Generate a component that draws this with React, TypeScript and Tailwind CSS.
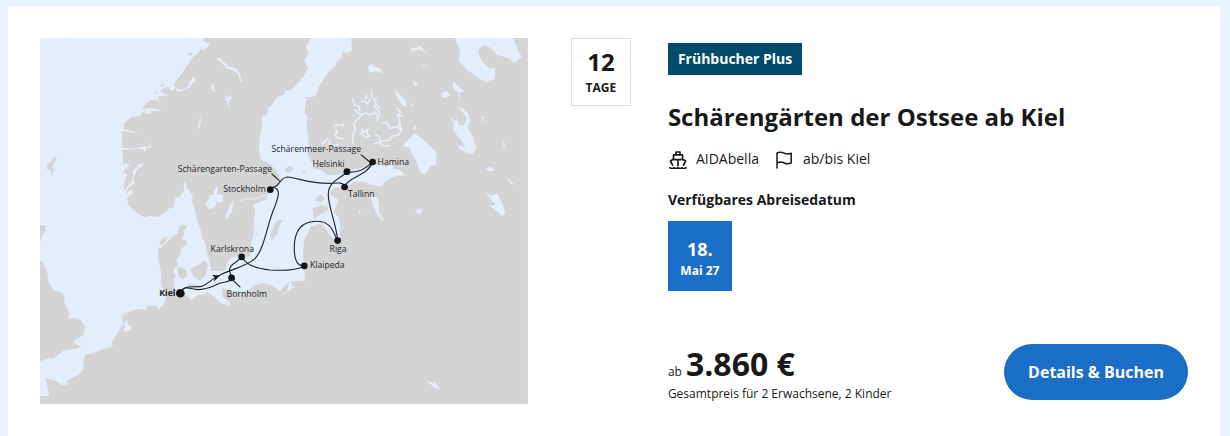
interface Port {
  name: string
  x: number
  y: number
  labelX: number
  labelY: number
}

const ports: Port[] = [
  { name: 'Stockholm', x: 691, y: 455, labelX: 550, labelY: 461 },
  { name: 'Helsinki', x: 921, y: 401, labelX: 818, labelY: 388 },
  { name: 'Hamina', x: 998, y: 372, labelX: 1013, labelY: 382 },
  { name: 'Tallinn', x: 914, y: 447, labelX: 924, labelY: 478 },
  { name: 'Riga', x: 893, y: 608, labelX: 869, labelY: 642 },
  { name: 'Klaipeda', x: 793, y: 684, labelX: 810, labelY: 691 },
  { name: 'Karlskrona', x: 605, y: 657, labelX: 512, labelY: 641 },
  { name: 'Bornholm', x: 575, y: 720, labelX: 560, labelY: 776 },
]

const land = [
  // Norway and Sweden
  'M490 0 L490 8 499 14 512 15 504 26 490 35 484 30 475 45 460 55 440 85 425 108 412 122 402 143 410 150 420 155 438 152 449 140 445 132 455 126 460 116 466 122 462 134 454 138 452 146 442 154 425 160 414 162 407 150 392 160 387 148 372 150 361 160 384 172 355 175 356 188 368 204 350 186 334 187 318 196 306 214 330 210 350 213 362 220 336 219 330 229 308 222 300 233 275 237 262 246 252 258 250 273 266 276 285 282 305 278 280 286 260 280 246 280 247 330 270 332 292 330 310 326 328 326 327 311 334 328 318 332 316 342 308 332 285 334 247 336 249 380 258 376 270 382 255 392 248 402 262 410 254 425 252 440 252 462 265 442 275 430 280 412 278 398 290 388 296 378 312 376 304 386 292 394 286 408 280 424 284 434 266 450 257 466 266 462 275 454 279 466 263 478 264 500 275 512 292 525 312 538 332 534 355 537 378 521 392 508 400 510 406 480 420 475 432 458 432 440 437 425 440 450 453 466 458 476 456 492 464 512 472 550 482 575 486 600 496 614 500 640 510 672 514 700 545 699 558 695 562 672 575 657 598 654 625 658 638 640 634 615 641 590 642 540 645 515 640 500 660 492 678 484 684 470 692 462 700 452 716 440 720 420 712 402 694 382 680 372 662 366 657 330 660 290 666 270 666 235 680 232 686 210 702 192 712 176 732 170 734 158 752 155 770 140 786 122 804 92 794 68 806 46 798 26 812 0 Z',
  // Finland, the Baltics, the continent and Jutland
  'M934 0 L936 38 922 44 906 42 908 56 892 70 884 86 862 106 838 144 828 172 816 178 794 176 800 184 796 210 794 222 803 238 800 262 804 290 806 318 802 345 812 368 826 382 820 392 840 394 860 410 880 412 910 408 940 396 970 388 1000 380 1020 382 1042 386 1058 374 1060 392 1078 396 1098 412 1070 414 1050 422 1036 430 1022 446 994 440 965 430 945 432 918 446 880 450 870 466 882 478 896 484 886 510 882 524 898 540 902 580 898 606 884 605 868 590 854 568 842 556 826 563 812 566 802 590 792 608 790 650 792 690 795 728 754 730 756 744 766 746 732 768 722 758 748 730 742 762 725 763 700 745 672 735 644 742 620 760 580 760 545 750 548 776 570 794 568 804 540 794 522 776 502 762 492 770 474 772 455 786 444 778 428 764 412 762 404 750 402 728 406 716 400 700 404 688 414 684 410 666 420 650 424 630 442 620 438 606 424 604 432 590 430 578 444 566 432 560 420 564 412 588 396 594 382 598 370 620 358 622 362 606 376 597 398 594 362 630 354 630 355 665 364 706 362 736 370 756 378 782 366 804 355 814 350 802 322 804 316 816 290 814 264 826 248 838 248 860 236 880 222 902 210 920 215 928 180 936 156 948 135 950 130 968 132 992 118 1008 94 1022 78 1032 86 1038 68 1042 40 1026 16 1022 22 1044 28 1075 0 1074 V1098 H1464 V0 Z',
  // Great Britain
  'M0 560 L16 564 15 578 4 600 0 612 Z',
  'M0 668 L10 674 22 704 26 734 42 758 66 764 74 776 72 792 88 824 84 842 102 840 122 846 136 866 130 890 112 902 98 914 124 926 110 932 70 938 40 962 28 960 0 970 Z',
  'M22 378 L34 374 38 362 50 352 46 366 36 388 42 394 34 416 32 396 22 396 Z',
  // Norwegian coast islands
  'M441 46 L458 44 452 54 Z',
  'M360 142 L376 138 368 146 Z',
  'M342 164 L354 160 350 168 Z',
  // Danish islands
  'M412 688 L425 688 440 698 440 716 430 724 416 716 Z',
  'M452 692 L466 684 480 678 492 666 504 680 500 700 494 716 480 728 460 716 Z',
  'M442 738 L460 740 478 742 472 754 452 750 Z',
  'M568 714 L580 712 584 726 574 728 Z',
  // Öland and Gotland
  'M654 560 L648 590 640 612 650 590 Z',
  'M708 550 L728 544 716 570 712 590 694 606 690 590 700 570 Z',
  // Åland and the Estonian islands
  'M736 392 L748 384 762 392 750 404 736 402 Z',
  'M782 402 L798 398 792 408 Z',
  'M826 482 L842 468 854 480 846 494 828 490 Z',
  'M818 510 L845 502 866 506 862 520 838 530 822 544 820 524 Z',
]

const lakes = [
  // Sweden
  'M502 486 L510 480 508 470 518 472 524 456 532 444 534 456 530 468 550 472 548 492 530 492 526 506 510 514 498 504 Z',
  'M582 484 L576 520 560 544 556 538 566 510 Z',
  'M480 232 L483 250 478 274 474 270 478 250 Z',
  'M516 138 L524 142 522 152 530 160 518 158 514 148 Z',
  'M552 170 L564 178 574 174 574 184 568 186 568 208 564 206 562 190 552 182 562 182 Z',
  'M526 60 L540 60 568 86 586 90 600 106 604 126 612 136 600 130 596 110 582 98 562 92 542 70 Z',
  // Finnish lakes
  'M984 86 L996 78 1006 88 1022 92 1030 106 1008 100 990 104 Z',
  'M1110 30 L1124 30 1140 24 1160 46 1136 34 1110 42 1118 34 Z',
  'M1062 152 L1080 170 1096 186 1100 208 1084 198 1072 178 Z',
  'M1118 126 L1132 134 1128 146 1120 138 Z',
  'M1140 80 L1162 82 1150 86 Z',
  // Ladoga, Onega, White Sea
  'M1124 286 L1140 296 1166 320 1190 344 1188 380 1172 384 1160 402 1154 412 1140 402 1130 370 1118 352 1108 330 1088 324 1100 310 Z',
  'M1248 204 L1270 212 1286 228 1290 246 1284 270 1300 300 1310 330 1298 348 1284 346 1256 332 1258 322 1276 330 1268 312 1250 290 1238 270 1242 258 1226 232 1244 250 1252 244 1256 262 1272 262 1282 240 1266 220 Z',
  'M1245 0 L1260 36 1258 70 1282 96 1322 124 1340 132 1364 122 1366 90 1350 92 1326 70 1316 46 1318 30 1334 22 1352 30 1372 50 1410 62 1424 74 1446 58 1436 40 1420 0 Z',
  'M1240 130 L1256 146 1274 160 1260 164 1260 200 1256 165 1240 152 Z',
  'M1206 164 L1222 160 1230 172 1216 180 1204 174 Z',
  'M1324 234 L1332 234 1328 256 Z',
  'M1390 306 L1396 320 1390 326 Z',
  'M1338 392 L1354 386 1364 396 1350 402 Z',
  'M1400 418 L1412 428 1424 440 1410 436 Z',
  'M1336 462 L1352 474 1372 466 1384 490 1396 520 1388 536 1370 520 1350 504 1366 500 1352 484 Z',
  // Peipus
  'M990 476 L1012 478 1018 500 1018 524 1030 544 1014 536 998 500 Z',
  'M958 514 L962 522 958 528 Z',
  'M1124 520 L1138 512 1150 520 1138 530 Z',
  'M1018 540 L1030 540 1030 550 Z',
  'M1158 1026 L1180 1036 1184 1030 1202 1056 1182 1048 Z',
  // IJsselmeer and the Rhine delta
  'M250 856 L262 844 264 858 274 866 268 880 250 880 256 866 Z',
  'M194 914 L214 912 220 922 196 926 Z',
]

const waterways = [
  'M938 184 l6 16 12 4 4 16 M946 214 l8 12 14 4 M962 192 l10 -4 12 10 6 -16 M980 170 l-2 14 M994 154 l2 22 12 14 -6 14 14 14 4 20 M1004 196 l18 14',
  'M938 320 l2 -14 -4 -12 10 -18 -4 -16 8 -14 14 -14 12 -8 14 8 16 -10 8 18 -6 12',
  'M960 290 l14 -10 10 -6 -4 12 10 8 -14 4 -8 -8 M964 270 l6 14 M1002 318 l16 -6 10 12 22 0 M1006 290 l12 6 4 14 28 -4 M1024 256 l18 -2 8 18 20 -6 14 10 -6 14 -20 4 -10 12',
  'M1068 210 l14 12 -8 14 6 20 -8 12 16 6 M1070 230 l18 4 M1080 256 l4 24 M880 268 l10 -8 22 2 -4 -6 M886 274 l8 8 -10 8 10 10 18 4 M844 320 l20 -18 M870 304 l-2 14 14 4 16 -4',
  'M1126 262 l-6 14 M1118 196 l-4 10 M1124 266 l2 6',
]

function RouteMap() {
  return (
    <svg
      viewBox="0 0 1464 1098"
      role="img"
      aria-label="Routenkarte"
      className="block h-auto w-full bg-[#e4eefb]"
    >
      <g fill="#d4d4d4">
        {land.map((d) => (
          <path key={d} d={d} />
        ))}
      </g>
      <g fill="#e4eefb">
        {lakes.map((d) => (
          <path key={d} d={d} />
        ))}
      </g>
      <g fill="none" stroke="#e4eefb" strokeWidth="5" strokeLinejoin="round">
        {waterways.map((d) => (
          <path key={d} d={d} />
        ))}
      </g>
      <g fill="none" strokeWidth="3">
        <path d="M600 488 L622 482 640 484 664 474 684 470" stroke="#e4eefb" />
        <path d="M242 836 Q255 824 285 818" stroke="#d4d4d4" />
      </g>
      <g
        fill="none"
        stroke="#22262b"
        strokeWidth="3.4"
        strokeLinecap="round"
        strokeLinejoin="round"
      >
        <path d="M421 766 C426 742 455 748 480 746 C500 744 510 726 535 714 C570 694 620 686 645 662 C675 630 680 560 705 505 C714 478 725 454 700 448 L691 455" />
        <path d="M700 448 C720 444 720 418 742 417 C780 420 800 438 880 436 C900 434 908 434 914 444 C930 415 985 412 998 372 C975 396 955 404 921 403 C895 425 866 430 865 470 C865 505 892 570 893 608" />
        <path d="M893 608 C880 585 876 550 830 550 C785 550 763 576 763 630 C763 665 770 684 793 684 C765 700 720 698 690 696 C640 690 620 680 605 657 C590 676 565 680 569 700 L575 720 C570 734 555 731 540 736 C515 746 500 756 470 755 C450 752 430 740 421 766" />
        <path d="M696 408 L718 428 M964 351 L990 372 M582 730 L600 747" />
      </g>
      <path d="M540 713 L516 711 525 719 522 731 Z" fill="#15181b" />
      <g className="fill-[#22262b] font-['Open_Sans',sans-serif] text-[26px]">
        {ports.map((port) => (
          <g key={port.name}>
            <circle cx={port.x} cy={port.y} r="10" fill="#121417" />
            <text x={port.labelX} y={port.labelY}>
              {port.name}
            </text>
          </g>
        ))}
        <text x="413" y="401">
          Schärengarten-Passage
        </text>
        <text x="695" y="343">
          Schärenmeer-Passage
        </text>
        <circle cx="421" cy="766" r="13" fill="#121417" />
        <text x="358" y="775" className="font-bold">
          Kiel
        </text>
      </g>
    </svg>
  )
}

function ShipIcon() {
  return (
    <svg
      viewBox="0 0 20 20"
      className="h-5 w-5"
      fill="none"
      stroke="currentColor"
      strokeWidth="1.7"
      strokeLinejoin="round"
      strokeLinecap="round"
      aria-hidden="true"
    >
      <path d="M8 5.8V3h4v2.8M5.5 10.6V5.8h9v4.8M10 10.6v6M4.6 16.2 2.4 12l2.4-1.4h10.4l2.4 1.4-2.2 4.2" />
      <path d="M2 18.8c1.3.9 2.7.9 4 0 1.3.9 2.7.9 4 0 1.3.9 2.7.9 4 0 1.3.9 2.7.9 4 0" />
    </svg>
  )
}

function FlagIcon() {
  return (
    <svg
      viewBox="0 0 20 20"
      className="h-5 w-5"
      fill="none"
      stroke="currentColor"
      strokeWidth="1.5"
      strokeLinejoin="round"
      strokeLinecap="round"
      aria-hidden="true"
    >
      <path d="M2 19V4c2.4-1.2 4.8-1 7.2.2 2.3 1.1 4.5 1 7 0v9.8c-2.5 1-4.7 1.1-7 0-2.4-1.2-4.8-1.2-7.2 0" />
    </svg>
  )
}

export default function App() {
  return (
    <main className="bg-[#e8f4ff] pt-1.5 pr-2.5 pl-2 font-['Open_Sans',sans-serif] text-[#191919]">
      <article className="flex bg-white p-8">
        <div className="w-[42.5%] shrink-0">
          <RouteMap />
        </div>

        <div className="mr-[37px] ml-[43px] flex h-[68px] w-[60px] shrink-0 flex-col items-center self-start border border-[#dcdbe6] pt-[9px] font-bold">
          <span className="text-2xl leading-7">12</span>
          <span className="text-xs leading-6">TAGE</span>
        </div>

        <div className="flex min-w-0 flex-1 flex-col items-start pt-[5px]">
          <span className="bg-[#004b69] px-2.5 text-sm leading-8 font-bold text-white">
            Frühbucher Plus
          </span>
          <h2 className="mt-6 text-2xl leading-9 font-bold">
            Schärengärten der Ostsee ab Kiel
          </h2>
          <ul className="mt-3.5 flex gap-4 text-sm leading-5">
            <li className="flex gap-2">
              <ShipIcon />
              AIDAbella
            </li>
            <li className="flex gap-2">
              <FlagIcon />
              ab/bis Kiel
            </li>
          </ul>
          <h3 className="mt-[21px] text-sm leading-5 font-bold">
            Verfügbares Abreisedatum
          </h3>
          <button
            type="button"
            className="mt-[11px] flex h-[70px] w-16 flex-col items-center bg-[#1b6ec6] pt-4 font-bold text-white"
          >
            <span className="text-lg leading-6">18.</span>
            <span className="text-xs leading-5">Mai 27</span>
          </button>

          <div className="mt-auto flex w-full items-end justify-between">
            <div>
              <p className="flex items-baseline gap-1 text-xs">
                ab
                <strong className="text-[32px] leading-10 font-bold">
                  3.860 €
                </strong>
              </p>
              <p className="text-xs leading-5">
                Gesamtpreis für 2 Erwachsene, 2 Kinder
              </p>
            </div>
            <button
              type="button"
              className="mb-1 rounded-full bg-[#1b6ec6] px-6 py-4 leading-6 font-bold text-white"
            >
              Details &amp; Buchen
            </button>
          </div>
        </div>
      </article>
    </main>
  )
}
